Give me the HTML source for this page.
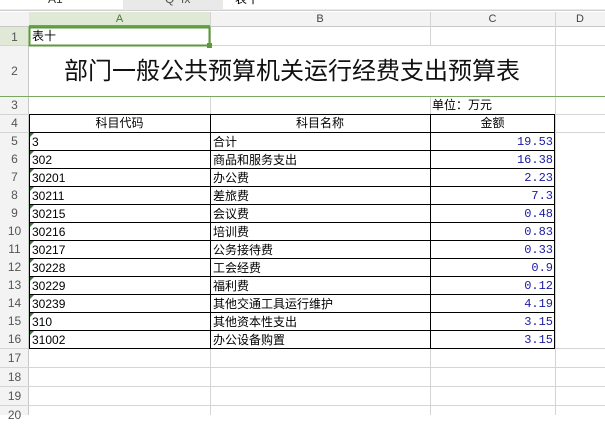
<!DOCTYPE html><html><head><meta charset="utf-8"><style>
body{margin:0;width:605px;height:415px;overflow:hidden;background:#fff;font-family:"Liberation Sans","Noto Sans CJK SC",sans-serif;position:relative}
.a{position:absolute;box-sizing:border-box}
.t{font-size:12px;line-height:18px;white-space:nowrap}
.rn{position:absolute;left:0;width:29px;font-size:12px;color:#555;text-align:center;line-height:18px}
</style></head><body>
<div class="a" style="left:0;top:0;width:605px;height:11px;background:#e9e9e9;border-bottom:1px solid #d0d0d0"></div>
<div class="a" style="left:0;top:-2px;width:123px;height:11px;background:#fff"></div>
<div class="a t" style="left:48px;top:-10px;color:#333">A1</div>
<div class="a t" style="left:165px;top:-10px;color:#555">Q &nbsp;fx</div>
<div class="a" style="left:223px;top:-2px;width:382px;height:11px;background:#fff"></div>
<div class="a t" style="left:235px;top:-10px">表十</div>
<div class="a" style="left:0;top:12px;width:605px;height:15px;background:#f3f3f3;border-bottom:1px solid #c8c8c8"></div>
<div class="a" style="left:29px;top:12px;width:181px;height:15px;background:#dfe9d6;border-bottom:2px solid #6aa84f"></div>
<div class="a t" style="left:29px;top:10px;width:181px;text-align:center;font-size:11px;color:#4a7a2f">A</div>
<div class="a t" style="left:210px;top:10px;width:220px;text-align:center;font-size:11px;color:#444">B</div>
<div class="a t" style="left:430px;top:10px;width:125px;text-align:center;font-size:11px;color:#444">C</div>
<div class="a t" style="left:555px;top:10px;width:50px;text-align:center;font-size:11px;color:#444">D</div>
<div class="a" style="left:0;top:27px;width:29px;height:388px;background:#f3f3f3;border-right:1px solid #c8c8c8"></div>
<div class="a" style="left:0;top:27px;width:29px;height:19px;background:#dfe9d6"></div>
<svg class="a" style="left:0;top:0" width="605" height="415">
<g stroke="#d4d4d4" stroke-width="1">
<line x1="210.5" y1="12" x2="210.5" y2="415"/><line x1="430.5" y1="12" x2="430.5" y2="415"/><line x1="555.5" y1="12" x2="555.5" y2="415"/>
<line x1="0" y1="45.5" x2="605" y2="45.5"/><line x1="0" y1="114.5" x2="605" y2="114.5"/>
<line x1="0" y1="367.5" x2="605" y2="367.5"/><line x1="0" y1="386.5" x2="605" y2="386.5"/><line x1="0" y1="405.5" x2="605" y2="405.5"/>
<line x1="0" y1="348.5" x2="605" y2="348.5"/>
</g>
<g stroke="#d4d4d4"><line x1="0" y1="132.5" x2="29" y2="132.5"/><line x1="555" y1="132.5" x2="605" y2="132.5"/></g>
<line x1="0" y1="96.5" x2="605" y2="96.5" stroke="#7aa860"/>
<rect x="29" y="46" width="526" height="50" fill="#fff"/>
<g stroke="#000" stroke-width="1">
<rect x="29.5" y="114.5" width="525" height="234" fill="none"/>
<line x1="210.5" y1="114" x2="210.5" y2="349"/><line x1="430.5" y1="114" x2="430.5" y2="349"/>
<line x1="29" y1="132.5" x2="555" y2="132.5"/><line x1="29" y1="150.5" x2="555" y2="150.5"/><line x1="29" y1="168.5" x2="555" y2="168.5"/><line x1="29" y1="186.5" x2="555" y2="186.5"/><line x1="29" y1="204.5" x2="555" y2="204.5"/><line x1="29" y1="222.5" x2="555" y2="222.5"/><line x1="29" y1="240.5" x2="555" y2="240.5"/><line x1="29" y1="258.5" x2="555" y2="258.5"/><line x1="29" y1="276.5" x2="555" y2="276.5"/><line x1="29" y1="294.5" x2="555" y2="294.5"/><line x1="29" y1="312.5" x2="555" y2="312.5"/><line x1="29" y1="330.5" x2="555" y2="330.5"/>
</g>
<g fill="#2e7d32">
<path d="M30 133h4l-4 4z"/><path d="M30 151h4l-4 4z"/><path d="M30 169h4l-4 4z"/><path d="M30 187h4l-4 4z"/><path d="M30 205h4l-4 4z"/><path d="M30 223h4l-4 4z"/><path d="M30 241h4l-4 4z"/><path d="M30 259h4l-4 4z"/><path d="M30 277h4l-4 4z"/><path d="M30 295h4l-4 4z"/><path d="M30 313h4l-4 4z"/><path d="M30 331h4l-4 4z"/>
</g>
<rect x="29.5" y="27.5" width="180" height="18" fill="none" stroke="#5a9a3a" stroke-width="2"/>
<rect x="207" y="43" width="5" height="5" fill="#5a9a3a"/>
</svg>
<div class="rn" style="top:28px">1</div>
<div class="rn" style="top:46px;line-height:50px">2</div>
<div class="rn" style="top:96px">3</div>
<div class="rn" style="top:114px">4</div>
<div class="rn" style="top:132px">5</div>
<div class="rn" style="top:150px">6</div>
<div class="rn" style="top:168px">7</div>
<div class="rn" style="top:186px">8</div>
<div class="rn" style="top:204px">9</div>
<div class="rn" style="top:222px">10</div>
<div class="rn" style="top:240px">11</div>
<div class="rn" style="top:258px">12</div>
<div class="rn" style="top:276px">13</div>
<div class="rn" style="top:294px">14</div>
<div class="rn" style="top:312px">15</div>
<div class="rn" style="top:330px">16</div>
<div class="rn" style="top:349px">17</div>
<div class="rn" style="top:368px">18</div>
<div class="rn" style="top:387px">19</div>
<div class="rn" style="top:406px">20</div>
<div class="a t" style="left:32px;top:27px;line-height:19px">表十</div>
<div class="a" style="left:29px;top:46px;width:526px;text-align:center;font-size:24px;line-height:52px;color:#111">部门一般公共预算机关运行经费支出预算表</div>
<div class="a t" style="left:432px;top:96px">单位：万元</div>
<div class="a" style="left:29px;top:114px;width:526px;font-size:12px;line-height:18px">
<div style="display:flex;height:18px"><div style="width:181px;text-align:center">科目代码</div><div style="width:220px;text-align:center">科目名称</div><div style="width:125px;text-align:center">金额</div></div>
</div>
<div class="a" style="left:32px;top:133px;font-size:12px;line-height:18px">3<br>302<br>30201<br>30211<br>30215<br>30216<br>30217<br>30228<br>30229<br>30239<br>310<br>31002</div>
<div class="a" style="left:213px;top:133px;font-size:12px;line-height:18px">合计<br>商品和服务支出<br>办公费<br>差旅费<br>会议费<br>培训费<br>公务接待费<br>工会经费<br>福利费<br>其他交通工具运行维护<br>其他资本性支出<br>办公设备购置</div>
<div class="a" style="left:430px;top:133px;width:123px;text-align:right;font-size:12px;line-height:18px;color:#1a1aa0;font-family:'Liberation Mono',monospace">19.53<br>16.38<br>2.23<br>7.3<br>0.48<br>0.83<br>0.33<br>0.9<br>0.12<br>4.19<br>3.15<br>3.15</div>
</body></html>
